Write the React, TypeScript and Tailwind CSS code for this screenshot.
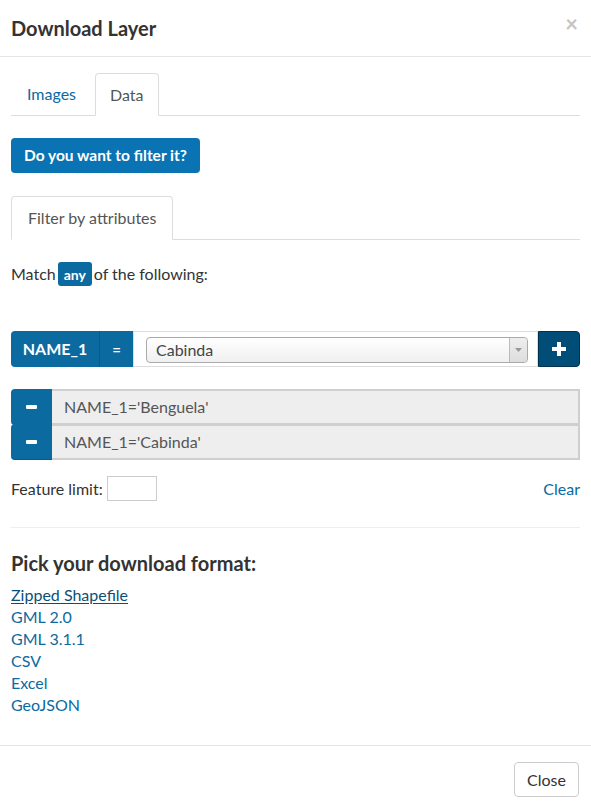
import React from "react";

export default function App() {
  const font = { fontFamily: "Lato, 'Open Sans', sans-serif" };
  return (
    <div className="w-[591px] h-[810px] bg-white text-[#333] flex flex-col" style={font}>
      {/* Header */}
      <div className="h-[57px] border-b border-[#e5e5e5] px-[11px] flex items-center justify-between">
        <h4 className="text-[20px] font-bold text-[#333] leading-none">Download Layer</h4>
        <span className="text-[#c4c4c4] text-[22px] font-bold leading-none mr-[2px] -mt-[8px]">×</span>
      </div>

      {/* Body */}
      <div className="px-[11px] flex-1">
        {/* Tabs */}
        <div className="mt-[16px] flex border-b border-[#ddd] h-[43px]">
          <div className="px-[16px] h-[42px] flex items-center text-[16px] text-[#0a6aa1] mr-[3px]">Images</div>
          <div className="px-[14px] h-[43px] flex items-center text-[16px] text-[#555] border border-[#ddd] border-b-white rounded-t-[4px] bg-white">Data</div>
        </div>

        <button className="mt-[22px] h-[35px] px-[13px] rounded-[4px] bg-[#0a73b3] text-white font-bold text-[15.5px] leading-none">
          Do you want to filter it?
        </button>

        {/* Filter tab */}
        <div className="mt-[23px] flex border-b border-[#ddd] h-[44px]">
          <div className="px-[16px] h-[44px] flex items-center text-[16px] text-[#555] border border-[#ddd] border-b-white rounded-t-[4px] bg-white">Filter by attributes</div>
        </div>

        <div className="mt-[22px] flex items-center h-[24px] text-[16px] text-[#333]">
          <span>Match</span>
          <span className="mx-[2px] h-[24px] w-[34px] flex items-center justify-center bg-[#0b6aa0] text-white font-bold text-[14px] rounded-[3px]">any</span>
          <span>of the following:</span>
        </div>

        {/* Filter row */}
        <div className="mt-[45px] flex h-[36px]">
          <div className="w-[89px] h-full bg-[#0b6aa0] text-white font-bold text-[16px] flex items-center justify-center rounded-l-[4px] border-r border-[#085a88]">NAME_1</div>
          <div className="w-[33px] h-full bg-[#0b6aa0] text-white font-bold text-[15px] flex items-center justify-center">=</div>
          <div className="flex-1 h-full border border-[#ddd] bg-white flex items-center pl-[12px] pr-[9px]">
            <div className="flex-1 h-[26px] mt-[2px] rounded-[4px] border border-[#aaa] bg-gradient-to-b from-white to-[#f0f0f0] flex items-center justify-between pl-[9px]">
              <span className="text-[16px] text-[#444]">Cabinda</span>
              <span className="w-[18px] h-full border-l border-[#bbb] flex items-center justify-center bg-gradient-to-b from-[#eee] to-[#ddd] rounded-r-[4px]">
                <svg width="7" height="4" viewBox="0 0 7 4"><path d="M0 0h7L3.5 4z" fill="#999" /></svg>
              </span>
            </div>
          </div>
          <div className="w-[42px] h-full bg-[#004e77] rounded-r-[4px] flex items-center justify-center border border-[#00314d]">
            <svg width="14" height="14" viewBox="0 0 14 14"><path d="M5 0h4v5h5v4H9v5H5V9H0V5h5z" fill="#fff" /></svg>
          </div>
        </div>

        {/* List */}
        <div className="mt-[22px] flex flex-col">
          {["NAME_1='Benguela'", "NAME_1='Cabinda'"].map((t, i) => (
            <div key={t} className={`flex h-[36px] ${i > 0 ? "-mt-px" : ""}`}>
              <div className="w-[41px] h-full bg-[#0b6aa0] rounded-[4px] rounded-r-none flex items-center justify-center border-b border-[#085a88]">
                <div className="w-[11px] h-[4px] rounded-[1px] bg-white" />
              </div>
              <div className="flex-1 h-full bg-[#eeeeee] border-2 border-l-0 border-[#cfcfcf] flex items-center pl-[12px] text-[16px] text-[#555]">{t}</div>
            </div>
          ))}
        </div>

        {/* Feature limit */}
        <div className="mt-[16px] flex items-center justify-between h-[25px]">
          <div className="flex items-center text-[16px] text-[#333]">
            <span>Feature limit:</span>
            <div className="ml-[4px] w-[50px] h-[25px] border border-[#ccc] bg-white" />
          </div>
          <a className="text-[16px] text-[#0a6aa1]">Clear</a>
        </div>

        <div className="mt-[26px] border-t border-[#eee]" />

        <h3 className="mt-[21px] text-[20px] font-bold text-[#333] leading-[28px]">Pick your download format:</h3>

        <div className="mt-[7px] flex flex-col text-[16px] leading-[22px] text-[#0a6aa1]">
          <a className="underline text-[#0a4f78] underline-offset-2">Zipped Shapefile</a>
          <a>GML 2.0</a>
          <a>GML 3.1.1</a>
          <a>CSV</a>
          <a>Excel</a>
          <a>GeoJSON</a>
        </div>
      </div>

      {/* Footer */}
      <div className="border-t border-[#e5e5e5] px-[12px] pt-[16px] pb-[13px] flex justify-end">
        <button className="h-[35px] w-[65px] border border-[#ccc] rounded-[4px] bg-white text-[16px] text-[#333]">Close</button>
      </div>
    </div>
  );
}
